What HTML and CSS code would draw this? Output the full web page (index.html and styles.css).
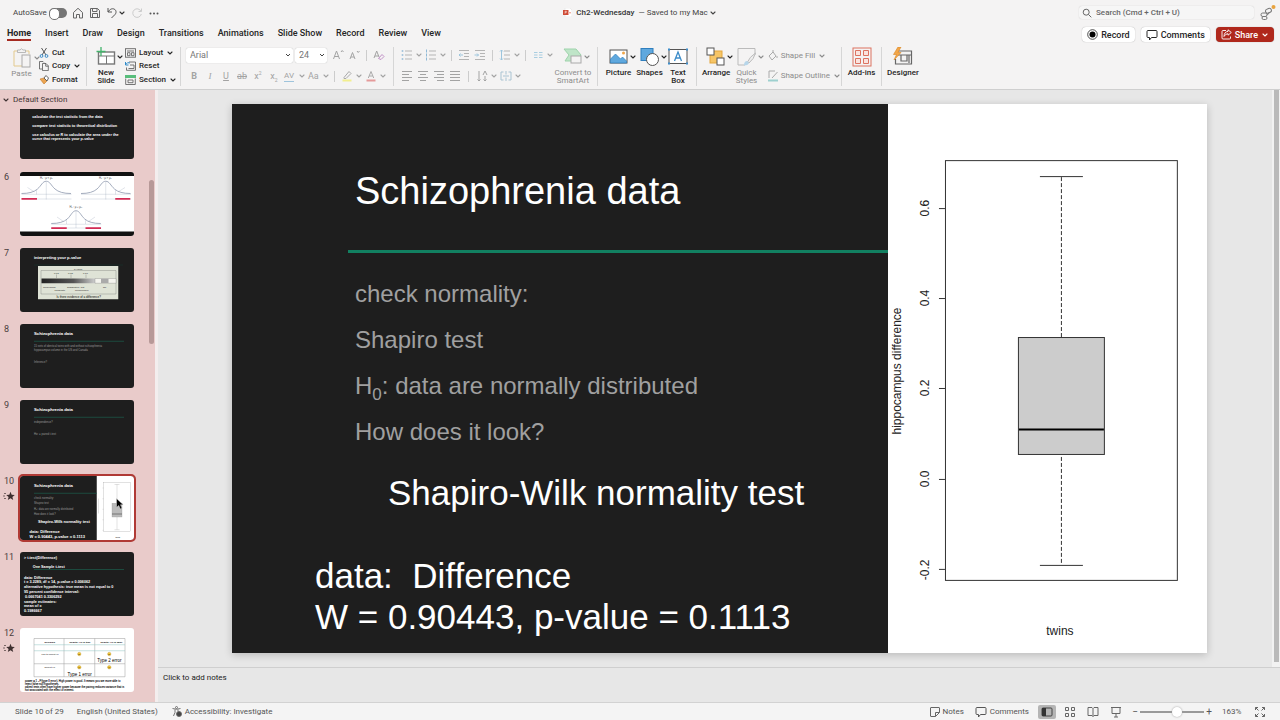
FILE: index.html
```html
<!DOCTYPE html>
<html lang="en">
<head>
<meta charset="utf-8">
<title>Ch2-Wednesday</title>
<link rel="stylesheet" href="styles.css">
</head>
<body>
<svg class="defs" aria-hidden="true">
  <symbol id="chev" viewBox="0 0 8 8"><path d="M2 3l2 2 2-2" fill="none" stroke="currentColor" stroke-width="1.1" stroke-linecap="round"/></symbol>
  <symbol id="star" viewBox="0 0 12 10"><path d="M7.500 .8l1.200 2.900 3.100.2-2.400 2 .8 3-2.700-1.600-2.700 1.600.8-3-2.400-2 3.100-.2z" fill="#3d2f2f"/><path d="M1 2.500h2M0 5h2M1 7.500h2" stroke="#5c4b4b" stroke-width=".8"/></symbol>
  <symbol id="bubble" viewBox="0 0 12 12"><path d="M2 1.500h8q1 0 1 1v5q0 1-1 1H5.500L3.500 11V8.500H2q-1 0-1-1v-5q0-1 1-1z" fill="none" stroke="currentColor"/></symbol>
</svg>
<header class="top">
  <div class="titlebar">
    <div class="quick">
      <label class="autosave">AutoSave <input type="checkbox" class="switch"></label>
      <button aria-label="Home"><svg width="12" height="12" viewBox="0 0 12 12"><path d="M1.500 5.500L6 1.300l4.500 4.200V11h-3V7.500h-3V11h-3z" fill="none" stroke="#666"/></svg></button>
      <button aria-label="Save"><svg width="12" height="12" viewBox="0 0 12 12"><path d="M1.500 1.500h7l2 2v7h-9zM3.500 1.500v3h4.500v-3M3.500 10.500v-4h5v4" fill="none" stroke="#666"/></svg></button>
      <button class="undo" aria-label="Undo"><svg width="12" height="12" viewBox="0 0 12 12"><path d="M2 1v4h4M2 5C4 2 6 1.300 8 2c2.500 1 2.500 4 1 5.500L5.500 11" fill="none" stroke="#555"/></svg><svg width="8" height="8"><use href="#chev"/></svg></button>
      <button aria-label="Redo"><svg width="12" height="12" viewBox="0 0 12 12"><path d="M10.500 1.500v3h-3M10 4.300A4.300 4.300 0 1 0 10.300 7" fill="none" stroke="#ccc"/></svg></button>
      <button aria-label="More"><svg width="12" height="12" viewBox="0 0 12 12" fill="#555"><circle cx="2.500" cy="6.500" r="1"/><circle cx="6" cy="6.500" r="1"/><circle cx="9.500" cy="6.500" r="1"/></svg></button>
    </div>
    <div class="doc"><svg width="9" height="9" viewBox="0 0 9 9"><path d="M2 0h5l2 2v7H2z" fill="#fff" stroke="#ddd" stroke-width=".5"/><rect y="2" width="5.500" height="5" fill="#cf4b36"/><path d="M2 5.800V3.200h1.300q.8.700 0 1.400H2M6 4h2v1.500H6z" fill="#e9866f" stroke="#fff" stroke-width=".4"/></svg><b>Ch2-Wednesday</b><span>— Saved to my Mac</span><svg width="8" height="8"><use href="#chev"/></svg></div>
    <div class="find">
      <label class="search"><svg width="10" height="10" viewBox="0 0 10 10"><circle cx="4.200" cy="4.200" r="3" fill="none" stroke="#666"/><path d="M6.500 6.500L9.300 9.300" stroke="#666"/></svg><input type="text" aria-label="Search" placeholder="Search (Cmd + Ctrl + U)"></label>
      <button aria-label="Assistant"><svg width="16" height="16" viewBox="0 0 16 16" fill="none" stroke="#777"><rect x="5.500" y="4" width="6" height="4" rx="2" transform="rotate(-25 8 6)"/><rect x="1" y="8" width="6" height="3.500" rx="1.700"/><rect x="2" y="11.500" width="5" height="3" rx="1.500"/><path d="M7 9.500q2 0 2-2"/><circle cx="13.500" cy="2" r="2" fill="#e8a33d" stroke="none"/></svg></button>
    </div>
  </div>
  <div class="tabbar">
    <nav class="tabs"><a class="on" href="#">Home</a><a href="#">Insert</a><a href="#">Draw</a><a href="#">Design</a><a href="#">Transitions</a><a href="#">Animations</a><a href="#">Slide Show</a><a href="#">Record</a><a href="#">Review</a><a href="#">View</a></nav>
    <div class="actions">
      <button class="pill"><svg width="11" height="11" viewBox="0 0 11 11"><circle cx="5.500" cy="5.500" r="4.800" fill="none" stroke="#222" stroke-width=".8"/><circle cx="5.500" cy="5.500" r="3"/></svg>Record</button>
      <button class="pill"><svg width="12" height="12"><use href="#bubble"/></svg>Comments</button>
      <button class="pill share"><svg width="11" height="11" viewBox="0 0 11 11" fill="none" stroke="#fff" stroke-width=".9"><path d="M5 1.500H2q-1 0-1 1V9q0 1 1 1h6.500q1 0 1-1V7.500M7 .8l3.300 2.700L7 6.200V4.700Q4.500 4.700 3 7.500 3.200 2.800 7 2.400z"/></svg>Share<svg width="8" height="8"><use href="#chev"/></svg></button>
    </div>
  </div>
  <div class="ribbon">
    <div class="group g-clip">
      <button class="big off"><span class="art"><svg width="18" height="20" viewBox="0 0 18 20" fill="none"><path d="M9 18H1V3h3M13 3h3v3" stroke="#e3c98d"/><path d="M4.500 4.500V2h2.500q1.500-2.500 3 0h2.500v2.500z" stroke="#aaa" stroke-width=".8"/><rect x="9" y="7" width="8" height="12" stroke="#aaa"/></svg><svg class="cv" width="8" height="8"><use href="#chev"/></svg></span>Paste</button>
      <div class="stack">
        <button><svg width="10" height="10" viewBox="0 0 10 10" fill="none"><path d="M2.500 0L7 7M7.500 0L3 7" stroke="#555"/><circle cx="2.500" cy="8" r="1.400" stroke="#3c8cc9"/><circle cx="7.500" cy="8" r="1.400" stroke="#3c8cc9"/></svg>Cut</button>
        <button><svg width="10" height="10" viewBox="0 0 10 10" fill="#f4f3f3" stroke="#555" stroke-width=".8"><path d="M3 8H.5V.5H4l1 1"/><path d="M3.500 2.500H7l2.300 2.300v4.800H3.500zM6.700 2.500v2.700h2.600"/></svg>Copy<svg width="8" height="8"><use href="#chev"/></svg></button>
        <button><svg width="10" height="10" viewBox="0 0 10 10"><path d="M1 4l4 5 3-3-3-3z" fill="#eba552" stroke="#c37a2b" stroke-width=".6"/><path d="M5 3l2-2.500L9.500 3 8 6z" fill="#fff" stroke="#555" stroke-width=".9"/></svg>Format</button>
      </div>
    </div>
    <div class="group g-slides">
      <button class="big"><span class="art"><svg width="20" height="20" viewBox="0 0 20 20" fill="none"><rect x="2.500" y="5" width="16" height="12" fill="#fff" stroke="#777" stroke-width="1.400"/><path d="M3 9h15M10.500 9v8" stroke="#777"/><path d="M5 0v9M.5 4.500h9" stroke="#43b36b" stroke-width="1.300"/></svg><svg class="cv" width="8" height="8"><use href="#chev"/></svg></span>New<br>Slide</button>
      <div class="stack">
        <button><svg width="11" height="10" viewBox="0 0 11 10" fill="none" stroke="#666" stroke-width=".9"><rect x=".5" y=".7" width="10" height="8.500"/><path d="M2 3h7M2.500 4.700h2.500v3H2.500zM6.500 4.700H9v3H6.500z"/></svg>Layout<svg width="8" height="8"><use href="#chev"/></svg></button>
        <button><svg width="11" height="10" viewBox="0 0 11 10" fill="none"><path d="M4 1h6.500v8.300h-9V6.500M5 4h4v3.500H3.500" stroke="#666" stroke-width=".9"/><path d="M.5 1v3h3M.8 3.500q1.700-3 4-1.500" stroke="#2f8bc9"/></svg>Reset</button>
        <button><svg width="11" height="10" viewBox="0 0 11 10" fill="none"><path d="M0 0h11v3H0z" fill="#58bd7b"/><path d="M.7 3.500v6h9.600v-6M3 5h5v2.700H3z" stroke="#666" stroke-width=".9"/></svg>Section<svg width="8" height="8"><use href="#chev"/></svg></button>
      </div>
    </div>
    <div class="group g-font">
      <div class="row">
        <select class="face" aria-label="Font"><option>Arial</option></select><select class="size" aria-label="Font size"><option>24</option></select>
        <button class="ib off" aria-label="Grow font"><svg width="14" height="12" viewBox="0 0 14 12" fill="none" stroke="currentColor"><path d="M2.500 10L5.500 2l3 8M3.500 7.500h4M10 3l1.200-1.500L12.500 3"/></svg></button>
        <button class="ib off" aria-label="Shrink font"><svg width="14" height="12" viewBox="0 0 14 12" fill="none" stroke="currentColor"><path d="M3 10l2.500-6.500L8 10M4 8h3M10 2l1.200 1.500L12.500 2"/></svg></button>
        <i class="sep"></i>
        <button class="ib off" aria-label="Clear formatting"><svg width="14" height="12" viewBox="0 0 14 12" fill="none" stroke="currentColor"><path d="M2 9l2.700-7L7 8M3 7h3.500"/><path d="M6.500 9.500L10 5.500l2 2-3 3z" stroke="#c291c7"/></svg></button>
      </div>
      <div class="row">
        <button class="ib off"><b>B</b></button><button class="ib off serif"><em>I</em></button><button class="ib off"><u>U</u></button><button class="ib off"><s>ab</s></button><button class="ib off" aria-label="Superscript"><span>x<sup>2</sup></span></button><button class="ib off" aria-label="Subscript"><span>x<sub>2</sub></span></button>
        <button class="ib menu off" aria-label="Spacing"><span class="under-blue">AV</span><svg width="8" height="8"><use href="#chev"/></svg></button>
        <button class="ib menu off" aria-label="Change case"><span>Aa</span><svg width="8" height="8"><use href="#chev"/></svg></button>
        <i class="sep"></i>
        <button class="ib menu off" aria-label="Highlight"><svg width="12" height="12" viewBox="0 0 12 12"><path d="M3 7.500L8 1.500l2 2L5 8.500H3z" fill="none" stroke="#aaa"/><path d="M1.500 9.500h9v2h-9z" fill="#f2ee8f"/></svg><svg width="8" height="8"><use href="#chev"/></svg></button>
        <button class="ib menu off" aria-label="Font color"><svg width="12" height="12" viewBox="0 0 12 12"><path d="M3.300 8L6 1.500 8.700 8M4.300 6h3.400" fill="none" stroke="#aaa"/><path d="M1.500 9.500h9v2h-9z" fill="#e59a9a"/></svg><svg width="8" height="8"><use href="#chev"/></svg></button>
      </div>
    </div>
    <div class="group g-para">
      <div>
        <div class="row">
          <button class="ib menu off" aria-label="Bullets"><svg width="12" height="12" viewBox="0 0 12 12"><path d="M4 2h7M4 6h7M4 10h7" stroke="#b5b5b5"/><path d="M.7 2h1.600M.7 6h1.600M.7 10h1.600" stroke="#8fb9d6" stroke-width="1.600"/></svg><svg width="8" height="8"><use href="#chev"/></svg></button>
          <button class="ib menu off" aria-label="Numbering"><svg width="12" height="12" viewBox="0 0 12 12"><path d="M4 2h7M4 6h7M4 10h7" stroke="#b5b5b5"/><path d="M1.500 .5v3M1.500 4.500v3M1.500 8.500v3" stroke="#8fb9d6"/></svg><svg width="8" height="8"><use href="#chev"/></svg></button>
          <i class="sep"></i>
          <button class="ib off" aria-label="Decrease indent"><svg width="12" height="12" viewBox="0 0 12 12"><path d="M1 1.500h10M6 4.500h5M6 7.500h5M1 10.500h10" stroke="#b5b5b5"/><path d="M5 6H1M2.500 4.500L1 6l1.500 1.500" fill="none" stroke="#9cc5dd"/></svg></button>
          <button class="ib off" aria-label="Increase indent"><svg width="12" height="12" viewBox="0 0 12 12"><path d="M1 1.500h10M6 4.500h5M6 7.500h5M1 10.500h10" stroke="#b5b5b5"/><path d="M.5 6h4M3 4.500L4.500 6 3 7.500" fill="none" stroke="#9cc5dd"/></svg></button>
          <i class="sep"></i>
          <button class="ib menu off" aria-label="Line spacing"><svg width="12" height="12" viewBox="0 0 12 12"><path d="M5 2h6M5 6h6M5 10h6" stroke="#b5b5b5"/><path d="M2.500 1v10M1 2.500L2.500 1 4 2.500M1 9.500L2.500 11 4 9.500" fill="none" stroke="#9cc5dd"/></svg><svg width="8" height="8"><use href="#chev"/></svg></button>
          <i class="sep"></i>
          <button class="ib menu off" aria-label="Columns"><svg width="12" height="12" viewBox="0 0 12 12"><path d="M2 3.500h3.500M2 6h3.500M2 8.500h3.500M7 3.500h3.500M7 6h3.500M7 8.500h3.500" stroke="#a9cde0"/></svg><svg width="8" height="8"><use href="#chev"/></svg></button>
        </div>
        <div class="row">
          <button class="ib off" aria-label="Align left"><svg width="12" height="12" viewBox="0 0 12 12" stroke="currentColor"><path d="M1 1.500h10M1 4.500h7M1 7.500h10M1 10.500h7"/></svg></button>
          <button class="ib off" aria-label="Center"><svg width="12" height="12" viewBox="0 0 12 12" stroke="currentColor"><path d="M1 1.500h10M3 4.500h6M1 7.500h10M3 10.500h6"/></svg></button>
          <button class="ib off" aria-label="Align right"><svg width="12" height="12" viewBox="0 0 12 12" stroke="currentColor"><path d="M1 1.500h10M4 4.500h7M1 7.500h10M4 10.500h7"/></svg></button>
          <button class="ib off" aria-label="Justify"><svg width="12" height="12" viewBox="0 0 12 12" stroke="currentColor"><path d="M1 1.500h10M1 4.500h10M1 7.500h10M1 10.500h10"/></svg></button>
          <i class="sep wide"></i>
          <button class="ib menu off" aria-label="Text direction"><svg width="12" height="12" viewBox="0 0 12 12" fill="none" stroke="currentColor"><path d="M3 1v10M1.500 9.500L3 11l1.500-1.500M7 5l2-4 2 4M9 6v5M7.500 9.500L9 11l1.500-1.500"/></svg><svg width="8" height="8"><use href="#chev"/></svg></button>
          <button class="ib menu off" aria-label="Align text"><svg width="12" height="12" viewBox="0 0 12 12" fill="none" stroke="#a9c3d2"><path d="M3.500 2H1v8h2.500M8.500 2H11v8H8.500M3 6h6M6 1v3.500M6 7.500V11"/></svg><svg width="8" height="8"><use href="#chev"/></svg></button>
        </div>
      </div>
      <button class="big off smart"><span class="art"><svg width="20" height="20" viewBox="0 0 20 20"><path d="M1 2h12l5 6-4 6H2l4-6z" fill="#bfe5c8" stroke="#9ed3ab"/><rect x="8" y="9" width="10" height="7" fill="#f4f3f3" stroke="#aaa"/></svg><svg class="cv" width="8" height="8"><use href="#chev"/></svg></span>Convert to<br>SmartArt</button>
    </div>
    <div class="group g-insert">
      <button class="big"><span class="art"><svg width="20" height="20" viewBox="0 0 20 20"><rect x="1" y="3" width="17" height="13" fill="#fff" stroke="#555"/><path d="M1.500 12l5-5 5 5 2-2 4 4v2h-16z" fill="#5fa8de" stroke="#2f7fbe" stroke-width=".7"/><circle cx="14.500" cy="6" r="1.500" fill="#f0a64a"/></svg><svg class="cv" width="8" height="8"><use href="#chev"/></svg></span>Picture</button>
      <button class="big"><span class="art"><svg width="20" height="20" viewBox="0 0 20 20"><rect x="1" y="1.500" width="12" height="12" fill="#5fa8de" stroke="#2f7fbe"/><circle cx="12.500" cy="12.500" r="6" fill="#fff" stroke="#555"/></svg><svg class="cv" width="8" height="8"><use href="#chev"/></svg></span>Shapes</button>
      <button class="big"><span class="art"><svg width="20" height="20" viewBox="0 0 20 20"><rect x="1" y="2.500" width="18" height="14" fill="#fff" stroke="#555"/><path d="M6.500 14L10 5l3.500 9M7.800 11h4.400" fill="none" stroke="#3c8cc9" stroke-width="1.300"/><path d="M0 1.500h2v2H0zM18 1.500h2v2h-2zM0 15.500h2v2H0zM18 15.500h2v2h-2z" fill="#3c8cc9"/></svg></span>Text<br>Box</button>
    </div>
    <div class="group g-arrange">
      <button class="big"><span class="art"><svg width="20" height="20" viewBox="0 0 20 20"><rect x="4" y="4" width="12" height="12" fill="#f6c566" stroke="#e3a63c"/><rect x="1" y="1" width="7" height="7" fill="#fff" stroke="#555"/><rect x="11" y="11" width="7" height="7" fill="#fff" stroke="#555"/></svg><svg class="cv" width="8" height="8"><use href="#chev"/></svg></span>Arrange</button>
      <button class="big off"><span class="art"><svg width="20" height="20" viewBox="0 0 20 20" fill="none"><path d="M8 18H1V1.500h17V8" stroke="#bbb"/><path d="M18.500 6q-6 4-8 9l1.500 1q5-4 6.500-10z" fill="#eee" stroke="#bbb"/><path d="M10 14q-3 0-3 4.500 4 0 5-2.500z" fill="#b7d6ea"/></svg><svg class="cv" width="8" height="8"><use href="#chev"/></svg></span>Quick<br>Styles</button>
      <div class="stack shape">
        <button class="off"><svg width="10" height="12" viewBox="0 0 10 12" fill="none" stroke="#aaa"><path d="M1 6l4-4 3 4-4 4zM5 3V0M9 6v2"/></svg>Shape Fill<svg width="8" height="8"><use href="#chev"/></svg></button>
        <button class="off"><svg width="10" height="12" viewBox="0 0 10 12" fill="none" stroke="#aaa"><path d="M7 1H1v7M9.500 2L4 8"/><path d="M0 10.500h10" stroke="#9ed0cf" stroke-width="2"/></svg>Shape Outline<svg width="8" height="8"><use href="#chev"/></svg></button>
      </div>
    </div>
    <div class="group g-one"><button class="big"><span class="art"><svg width="20" height="20" viewBox="0 0 20 20" fill="#fbe3de" stroke="#dc7361"><rect x="1" y="1" width="18" height="18" fill="none"/><path d="M3.500 3.500h5v5h-5zM11.500 3.500h5v5h-5zM3.500 11.500h5v5h-5zM11.500 11.500h5v5h-5z"/></svg></span>Add-ins</button></div>
    <div class="group g-last"><button class="big"><span class="art"><svg width="20" height="20" viewBox="0 0 20 20" fill="none"><path d="M5 4h13.500v13H2.500v-5M5 8h13M8 8v6h6V8M16 8v8" stroke="#666" stroke-width="1.200"/><path d="M5 0L.5 7.500h3L1 13l7-7.500H5L8 0z" fill="#f3a648" stroke="#d98420" stroke-width=".6"/></svg></span>Designer</button></div>
  </div>
</header>
<main class="work">
  <aside class="panel">
    <button class="section"><svg width="8" height="8"><use href="#chev"/></svg>Default Section</button>
    <ol class="slides">
      <li><span></span>
        <svg class="thumb" viewBox="0 56 456 200"><rect width="456" height="256" fill="#1e1e1e"/><g fill="#fff" font-size="15" font-weight="bold"><text x="49" y="92">calculate the test statistic from the data</text><text x="49" y="127">compare test statistic to theoretical distribution</text><text x="49" y="162">use calculus or R to calculate the area under the</text><text x="49" y="179">curve that represents your p-value</text></g></svg></li>
      <li><span>6</span>
        <svg class="thumb" viewBox="0 0 456 256"><rect width="456" height="256" fill="#fff"/><path d="M0 0h456v16H0zM0 238h456v18H0z" fill="#111"/>
          <g fill="none" stroke="#8791a8" stroke-width="3"><path d="M6 86Q50 86 70 68C86 54 90 37 105 37S124 54 140 68Q160 86 204 86M244 86Q288 86 308 68C324 54 328 37 343 37S362 54 378 68Q398 86 442 86M125 206Q169 206 189 188C205 174 209 155 224 155S243 174 259 188Q279 206 323 206"/><path d="M6 89h200M244 89h200M125 209h200M6 108h200M244 108h200M125 224h200" stroke-width="1"/><path d="M105 40v70M343 40v70M224 158v66M66 72v18M382 72v18M186 190v18M262 190v18M30 62l28 18M420 62l-28 18M148 180l26 18M300 180l-26 18" stroke-width="1"/></g>
          <path d="M6 107h62M381 107h60M125 224h62M262 224h62" stroke="#d32c55" stroke-width="7"/>
          <g font-size="11" fill="#555"><text x="80" y="28">H₁ : μ &lt; μ₀</text><text x="316" y="28">H₁ : μ &gt; μ₀</text><text x="198" y="144">H₁ : μ ≠ μ₀</text></g></svg></li>
      <li><span>7</span>
        <svg class="thumb" viewBox="0 0 456 256"><defs><linearGradient id="ev"><stop offset="0" stop-color="#222"/><stop offset=".6" stop-color="#555"/><stop offset="1" stop-color="#ccc"/></linearGradient></defs><rect width="456" height="256" fill="#1e1e1e"/><text x="56" y="44" font-size="16" font-weight="bold" fill="#fff">interpreting your p-value</text><path d="M56 68h356" stroke="#173b32" stroke-width="2"/><rect x="72" y="72" width="321" height="133" fill="#dfe3d6"/><path d="M84 90h300M84 90v94M384 90v94M84 184h300M146 106v14M204 106v14M264 106v14" stroke="#444" fill="none"/><rect x="86" y="122" width="214" height="19" fill="url(#ev)"/><path d="M300 122h84v19h-84z" fill="#f4f4ee" stroke="#555"/><rect x="324" y="123" width="30" height="17" fill="#aaa"/>
          <g font-size="10" fill="#222"><text x="216" y="87">P-value</text><text x="136" y="104">0.01</text><text x="192" y="104">0.05</text><text x="252" y="104">0.10</text><text x="92" y="158">Convincing</text><text x="188" y="158">Suggestive, but</text><text x="138" y="172">Moderate</text><text x="220" y="172">inconclusive</text><text x="332" y="158">No</text></g><text x="146" y="201" font-size="12">Is there evidence of a difference?</text></svg></li>
      <li><span>8</span>
        <svg class="thumb" viewBox="0 0 456 256"><rect width="456" height="256" fill="#1e1e1e"/><text x="56" y="44" font-size="17" font-weight="bold" fill="#fff">Schizophrenia data</text><path d="M56 69h360" stroke="#1c5a49" stroke-width="3"/><g font-size="11" fill="#999"><text x="56" y="93">15 sets of identical twins with and without schizophrenia</text><text x="56" y="108">hippocampus volume in the US and Canada</text><text x="56" y="155">Inference?</text></g></svg></li>
      <li><span>9</span>
        <svg class="thumb" viewBox="0 0 456 256"><rect width="456" height="256" fill="#1e1e1e"/><text x="56" y="44" font-size="17" font-weight="bold" fill="#fff">Schizophrenia data</text><path d="M56 69h360" stroke="#1c5a49" stroke-width="3"/><g font-size="11" fill="#999"><text x="56" y="93">independence?</text><text x="56" y="141">Ho: = paired t-test</text></g></svg></li>
      <li><span>10<svg width="12" height="10"><use href="#star"/></svg></span>
        <svg class="thumb current" viewBox="0 0 456 256"><rect width="456" height="256" fill="#1e1e1e"/><rect x="307" width="149" height="256" fill="#fff"/><text x="56" y="44" font-size="17" font-weight="bold" fill="#fff">Schizophrenia data</text><path d="M56 69h251" stroke="#1c5a49" stroke-width="3"/><g font-size="11" fill="#999"><text x="56" y="92">check normality:</text><text x="56" y="113">Shapiro test</text><text x="56" y="135">H₀: data are normally distributed</text><text x="56" y="156">How does it look?</text></g><g font-size="16" font-weight="bold" fill="#fff"><text x="72" y="188">Shapiro-Wilk normality test</text><text x="38" y="227">data:  Difference</text><text x="38" y="246">W = 0.90443, p-value = 0.1113</text></g>
          <g fill="none" stroke="#888" stroke-width="1"><rect x="334" y="26" width="108" height="196"/><path d="M378 34h20M388 34v75M388 164v50M378 215h20M330 48h4M330 91h4M330 133h4M330 175h4M330 217h4M314 90v60" /><rect x="368" y="109" width="40" height="55" fill="#bbb"/></g><path d="M368 152h40" stroke="#333" stroke-width="2"/><text x="382" y="248" font-size="8">twins</text>
          <path d="M386 90v36l9-8 6 14 7-3-6-14h11z" fill="#000" stroke="#ddd" stroke-width="2"/></svg></li>
      <li><span>11</span>
        <svg class="thumb" viewBox="0 0 456 256"><rect width="456" height="256" fill="#1e1e1e"/><path d="M56 70h360" stroke="#1c5a49" stroke-width="3"/><g font-size="15" font-weight="bold" fill="#fff"><text x="16" y="27">&gt; t.test(Difference)</text><text x="51" y="65">One Sample t-test</text><text x="16" y="106">data:  Difference</text><text x="16" y="125">t = 3.2289, df = 14, p-value = 0.006062</text><text x="16" y="144">alternative hypothesis: true mean is not equal to 0</text><text x="16" y="163">95 percent confidence interval:</text><text x="20" y="183">0.0667041 0.3306292</text><text x="16" y="202">sample estimates:</text><text x="16" y="221">mean of x</text><text x="16" y="240">0.1986667</text></g></svg></li>
      <li><span>12<svg width="12" height="10"><use href="#star"/></svg></span>
        <svg class="thumb" viewBox="0 0 456 256"><rect width="456" height="256" fill="#fff"/><path d="M56 42h364v153H56zM56 143h364M176 42v153M299 42v153" fill="none" stroke="#999" stroke-width="2"/><path d="M56 67h364M56 91h364" stroke="#8fc5c2" stroke-width="2"/><g font-size="10" font-weight="bold"><text x="98" y="58">Decision</text><text x="198" y="58">Reality: H₀ is true</text><text x="322" y="58">Reality: H₀ is false</text></g><g font-size="10"><text x="86" y="108">Fail to reject H₀</text><text x="98" y="160">Reject H₀</text></g><g fill="#f5c83c" stroke="#9c7b1d"><circle cx="237" cy="104" r="7"/><circle cx="357" cy="104" r="7"/><circle cx="237" cy="157" r="7"/><circle cx="357" cy="157" r="7"/></g><path d="M233 106h8M353 106h8M233 159h8M353 159h8" stroke="#553d00" stroke-width="2"/><g font-size="18"><text x="309" y="137">Type 2 error</text><text x="190" y="190">Type 1 error</text></g><g font-size="11" stroke="#000" stroke-width=".3"><text x="20" y="215">power = 1 - P(type II error). High power is good. It means you are more able to</text><text x="20" y="227">reject false null hypotheses.</text><text x="20" y="240">paired tests often have higher power because the pairing reduces variance that is</text><text x="20" y="252">not associated with the effect of interest.</text></g></svg></li>
    </ol>
    <i class="thumbbar"></i>
  </aside>
  <section class="editor">
    <div class="stage">
      <article class="slide">
        <div class="words">
          <h1>Schizophrenia data</h1>
          <div class="body"><p>check normality:</p><p>Shapiro test</p><p>H<sub>0</sub>: data are normally distributed</p><p>How does it look?</p></div>
          <div class="output"><p class="head">Shapiro-Wilk normality test</p><p>data:&nbsp; Difference<br>W = 0.90443, p-value = 0.1113</p></div>
        </div>
        <svg class="plot" viewBox="0 0 319 549" role="img" aria-label="Box plot of hippocampus difference">
          <g fill="none" stroke="#333"><rect x="57.500" y="56.500" width="232" height="420"/><path d="M51 104.500h6M51 194.500h6M51 284.500h6M51 375.500h6M51 465.500h6M152 72.500h43M152 461.500h43"/><path d="M173.500 73v160M173.500 353v108" stroke-dasharray="4 2"/><rect x="130.500" y="233.500" width="86" height="117" fill="#ccc"/></g>
          <path d="M131 325.500h85" stroke="#000" stroke-width="2"/>
          <g font-size="12" fill="#222" text-anchor="middle"><text transform="translate(41 104) rotate(-90)">0.6</text><text transform="translate(41 194) rotate(-90)">0.4</text><text transform="translate(41 284) rotate(-90)">0.2</text><text transform="translate(41 375) rotate(-90)">0.0</text><text transform="translate(41 466) rotate(-90)">-0.2</text><text transform="translate(13 267) rotate(-90)">hippocampus difference</text><text x="172" y="531">twins</text></g>
        </svg>
      </article>
      <i class="scroll"></i>
    </div>
    <div class="notes">Click to add notes</div>
  </section>
</main>
<footer class="status">
  <span class="s-num">Slide 10 of 29</span><span class="s-lang">English (United States)</span>
  <button><svg width="10" height="11" viewBox="0 0 10 11" fill="none" stroke="#666" stroke-width=".9"><circle cx="4.500" cy="1.500" r="1"/><path d="M.5 2.500q4 1.500 8 0M3 3.500v3L1.500 10M6 3.500v2"/><circle cx="7" cy="8" r="2.500" fill="#444"/></svg>Accessibility: Investigate</button>
  <div class="views">
    <button><svg width="10" height="10" viewBox="0 0 10 10" fill="none" stroke="#666"><path d="M9.500 5.500V1q0-.5-.5-.5H1q-.5 0-.5.500v8q0 .5.5.5h4.500zM5.500 9.500v-4h4"/></svg>Notes</button>
    <button class="s-com"><svg width="12" height="12"><use href="#bubble"/></svg>Comments</button>
    <button class="view on" aria-label="Normal"><svg width="12" height="10" viewBox="0 0 12 10"><rect x="1" y="1" width="10" height="8" rx="1" fill="none" stroke="#444"/><path d="M1 1h4v8H1z" fill="#333"/></svg></button>
    <button class="view" aria-label="Slide sorter"><svg width="12" height="12" viewBox="0 0 12 12" fill="none" stroke="#666"><path d="M1.500 1.500h3v3h-3zM7.500 1.500h3v3h-3zM1.500 7.500h3v3h-3zM7.500 7.500h3v3h-3z"/></svg></button>
    <button class="view" aria-label="Reading view"><svg width="12" height="12" viewBox="0 0 12 12" fill="none" stroke="#666"><path d="M6 2.500v8M1 1.500h4l1 1 1-1h4v8H7l-1 1-1-1H1z"/></svg></button>
    <button class="view" aria-label="Slide show"><svg width="12" height="12" viewBox="0 0 12 12" fill="none" stroke="#666"><path d="M1 1.500h10M2 2v5.500h8V2M6 8v3M4 11h4"/></svg></button>
    <button class="zm" aria-label="Zoom out">−</button><input type="range" aria-label="Zoom" value="60"><button class="zm" aria-label="Zoom in">+</button><span class="pct">163%</span>
    <button aria-label="Fit"><svg width="10" height="10" viewBox="0 0 10 10" fill="none" stroke="#666"><path d="M.5 3V.5H3M.5.5L3.500 3.500M7 .5h2.500V3M9.500.5l-3 3M.5 7v2.500H3M.5 9.500l3-3M7 9.500h2.500V7M9.500 9.500l-3-3"/></svg></button>
  </div>
</footer>
</body>
</html>
```
FILE: styles.css
```css
* { box-sizing: border-box; }
body { margin: 0; height: 100vh; display: flex; flex-direction: column; overflow: hidden; background: #e7e7e7; color: #262626; font: 400 8px/10px Roboto, "Noto Sans", sans-serif; }
button, input, select { font: inherit; color: inherit; border: 0; background: none; padding: 0; margin: 0; }
button { display: flex; align-items: center; white-space: nowrap; }
svg { display: block; flex: none; }
.defs { position: absolute; width: 0; height: 0; }

.top { background: #f4f3f3; border-bottom: 1px solid #cfcfcf; }
.titlebar { display: grid; grid-template-columns: 1fr auto 1fr; align-items: center; height: 25px; }
.quick { display: flex; align-items: center; gap: 5px; padding-left: 13px; color: #444; }
.autosave { display: flex; align-items: center; gap: 2px; }
.switch { appearance: none; width: 18px; height: 10px; border-radius: 5px; background: #757575; display: flex; }
.switch::before { content: ""; width: 9px; height: 10px; border: 1px solid #757575; border-radius: 5px; background: #fff; }
.undo { color: #333; }
.doc { display: flex; align-items: center; gap: 4px; color: #444; }
.doc svg:last-child { margin-left: -3px; }
.doc b { color: #333; font-weight: 500; }
.find { display: flex; justify-content: flex-end; align-items: center; gap: 6px; padding-right: 4px; }
.search { display: flex; align-items: center; gap: 4px; width: 175px; height: 13px; padding-left: 3px; border-radius: 3px; background: #f6f6f6; box-shadow: 0 0 1px #bbb; }
.search input { flex: 1; min-width: 0; font-size: 8px; font-weight: 500; outline: 0; }
.search input::placeholder { color: #666; opacity: 1; }

.tabbar { display: flex; justify-content: space-between; height: 19px; padding: 0 6px 0 7px; font-weight: 500; }
.tabs { display: flex; gap: 14px; font-size: 9px; }
.tabs a { color: #262626; text-decoration: none; line-height: 16px; }
.tabs .on { height: 16px; font-weight: 700; border-bottom: 2px solid #a52a20; }
.actions { display: flex; align-items: center; gap: 6px; }
.pill { height: 15px; gap: 3px; padding: 0 5px; border-radius: 4px; background: #fff; box-shadow: 0 0 1px #999; font-size: 9px; }
.share { background: #b0281c; color: #fff; }

.ribbon { display: flex; height: 45px; padding: 3px 0 3px; font-weight: 500; }
.ribbon .off { color: #a3a3a3; font-weight: 400; }
.group { display: flex; border-right: 1px solid #d6d6d6; }
.big { flex-direction: column; align-items: center; font-size: 8px; line-height: 8px; text-align: center; justify-content: flex-start; }
.big.off, .shape .off { color: #8c8c8c; }
.art { display: block; position: relative; height: 21px; margin-bottom: 1px; }
.cv { position: absolute; left: 20px; top: 6px; }
.stack { display: flex; flex-direction: column; justify-content: space-between; padding-bottom: 1px; }
.stack button { gap: 3px; height: 11px; }
.g-clip { width: 87px; padding-left: 9px; gap: 5px; }
.g-clip .big { width: 25px; padding-top: 1px; }
.g-slides { width: 94px; padding-left: 6px; gap: 6px; }
.g-slides .big { width: 26px; }
.g-font { width: 213px; padding-left: 5px; flex-direction: column; gap: 5px; }
.g-para { width: 204px; padding-left: 5px; }
.g-para > div { display: flex; flex-direction: column; gap: 5px; width: 155px; }
.row { display: flex; align-items: center; height: 16px; }
.ib { width: 16px; height: 16px; justify-content: center; font-size: 9px; }
.ib.menu { width: 24px; justify-content: space-between; padding-left: 2px; gap: 0; }
.serif { font-family: "Liberation Serif", serif; }
.ib sup, .ib sub { font-size: 5px; line-height: 0; }
.under-blue { border-bottom: 1px solid #9fc4dc; font-size: 8px; }
.sep { width: 9px; height: 11px; background: linear-gradient(#ccc, #ccc) center / 1px 100% no-repeat; }
.sep.wide { width: 11px; }
.row select { appearance: none; height: 15px; border-radius: 2px; color: #777; font-size: 9px; font-weight: 400; padding-left: 4px; background: #fff url("data:image/svg+xml,%3Csvg xmlns='http://www.w3.org/2000/svg' viewBox='0 0 8 8'%3E%3Cpath d='M2 3l2 2 2-2' fill='none' stroke='%23444'/%3E%3C/svg%3E") right 1px center / 8px no-repeat; box-shadow: 0 0 1px #aaa; }
.face { width: 107px; margin-right: 2px; }
.size { width: 32px; margin-right: 3px; }
.smart { width: 44px; margin-left: -3px; }
.g-insert { width: 99px; padding-left: 5px; gap: 0; }
.g-insert .big { width: 31px; }
.g-insert .big:last-child { width: 24px; margin-left: 1px; }
.g-arrange { width: 145px; padding-left: 4px; }
.g-arrange .big { width: 32px; }
.shape { justify-content: flex-start; gap: 9px; padding: 3px 0 0 6px; }
.g-one { width: 40px; justify-content: center; }
.g-last { width: 42px; justify-content: center; border: 0; }

.work { flex: 1; min-height: 0; display: flex; }
.panel { position: relative; width: 158px; background: #e9cbca; border-right: 3px solid #f3eeee; overflow: hidden; flex: none; }
.section { gap: 3px; height: 19px; padding-left: 2px; color: #3f3333; }
.slides { list-style: none; margin: 0; padding: 0; display: flex; flex-direction: column; gap: 12px; }
.slides li { display: flex; }
.slides li > span { width: 20px; padding-left: 4px; font-size: 9px; color: #4a3d3d; }
.slides li > span svg { margin: 5px 0 0 -1px; }
.thumb { width: 114px; height: 64px; border-radius: 3px; font-family: "Liberation Sans", Arial, sans-serif; }
.slides li:first-child .thumb { height: 50px; border-radius: 0 0 3px 3px; }
.slides li:first-child { margin-bottom: 1px; }
.current { outline: 2px solid #b03a35; }
.thumbbar { position: absolute; right: 1px; top: 90px; width: 5px; height: 164px; border-radius: 3px; background: #b79998; }

.editor { flex: 1; min-width: 0; display: flex; flex-direction: column; }
.stage { flex: 1; min-height: 0; display: flex; align-items: flex-start; padding: 14px 0 0 74px; }
.slide { flex: 1; display: flex; aspect-ratio: 975 / 549; background: #fff; font-family: "Liberation Sans", Arial, sans-serif; font-weight: 400; box-shadow: 0 2px 8px #0003; }
.words { width: 67.3%; background: #1e1e1e; color: #fff; padding: 0 0 0 83px; }
.words p { margin: 0; }
.words h1 { margin: 0 0 0 33px; height: 149px; padding: 65px 0 0 7px; border-bottom: 3px solid #128061; font-weight: 400; font-size: 38px; line-height: 44px; }
.body { margin: 19px 0 0 40px; display: flex; flex-direction: column; gap: 2px; font-size: 24px; line-height: 44px; color: #a0a0a0; }
.body sub { font-size: 17px; line-height: 0; vertical-align: -6px; }
.output { margin-top: 18px; font-size: 35px; line-height: 41px; white-space: nowrap; }
.output .head { padding: 0 0 42px 73px; }
.plot { flex: 1; min-width: 0; align-self: stretch; }
.scroll { align-self: stretch; flex: none; width: 8px; margin: -14px 0 0 65px; background: linear-gradient(#bababa, #bababa) 2px 0 / 5px calc(100% - 5px) no-repeat #f2f2f2; }
.notes { height: 35px; padding: 5px 5px; border-top: 1px solid #cfcfcf; color: #222; }

.status { display: flex; align-items: center; height: 18px; border-top: 1px solid #d2d2d2; background: #f4f4f4; padding: 0 15px; color: #555; }
.status button { gap: 3px; }
.s-lang { margin: 0 14px 0 13px; }
.views { margin-left: auto; display: flex; align-items: center; }
.s-com { margin: 0 9px 0 11px; }
.view { width: 18px; height: 14px; justify-content: center; margin-right: 5px; }
.view.on { background: #b5b5b5; border-radius: 2px; }
.zm { width: 10px; justify-content: center; font-size: 10px; }
.views input { appearance: none; width: 64px; height: 10px; background: linear-gradient(#999, #999) center / 100% 2px no-repeat; }
.views input::-webkit-slider-thumb { appearance: none; width: 10px; height: 10px; border-radius: 5px; background: #fff; box-shadow: 0 0 2px #999; }
.pct { width: 33px; margin-left: 8px; }
```
